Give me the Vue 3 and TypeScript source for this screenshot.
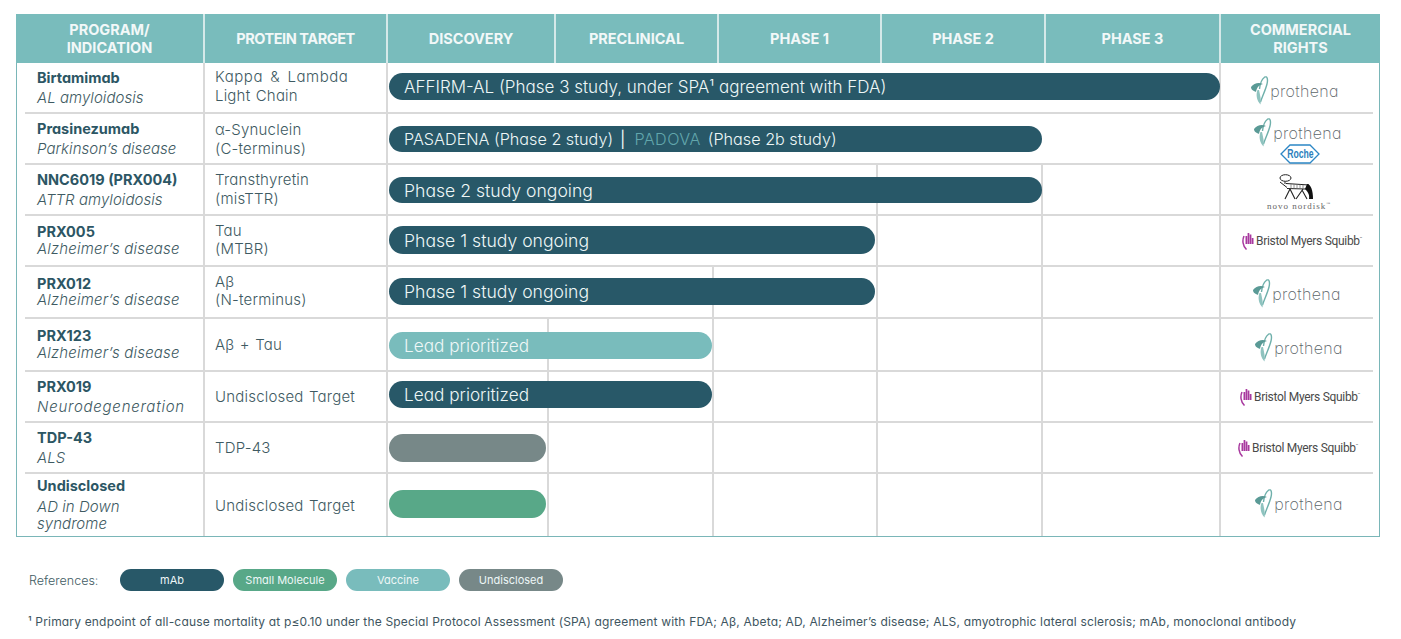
<script setup lang="ts">
type Logo = 'prothena' | 'roche' | 'novo' | 'bms'
interface Seg { t: string; kind?: 'accent' | 'pipe' }
interface Row {
  name: string
  subs: string[]
  target: string[]
  tPad: number
  tight?: boolean
  wide?: boolean
  h: number
  lines: number[]
  bar: { span: number; end: number; top: number; h: number; fs: number; tone: string; segs: Seg[] }
  logo: Logo
  dx: number
  dy: number
}
const heads = [
  ['PROGRAM/', 'INDICATION'], ['PROTEIN TARGET'], ['DISCOVERY'], ['PRECLINICAL'],
  ['PHASE 1'], ['PHASE 2'], ['PHASE 3'], ['COMMERCIAL', 'RIGHTS'],
]
const phases = [0, 1, 2, 3, 4]
const rows: Row[] = [
  { name: 'Birtamimab', subs: ['AL amyloidosis'], target: ['Kappa & Lambda', 'Light Chain'], tPad: 3, h: 51, lines: [], logo: 'prothena', dx: -2, dy: 3,
    bar: { span: 5, end: 1, top: 10, h: 27, fs: 17, tone: 'dark', segs: [{ t: 'AFFIRM-AL (Phase 3 study, under SPA¹ agreement with FDA)' }] } },
  { name: 'Prasinezumab', subs: ['Parkinson’s disease'], target: ['α-Synuclein', '(C-terminus)'], tPad: 0, h: 51, lines: [4], logo: 'roche', dx: 1, dy: 2,
    bar: { span: 4, end: 1, top: 12, h: 26, fs: 16.2, tone: 'dark', segs: [{ t: 'PASADENA (Phase 2 study)' }, { t: '|', kind: 'pipe' }, { t: 'PADOVA', kind: 'accent' }, { t: '(Phase 2b study)' }] } },
  { name: 'NNC6019 (PRX004)', subs: ['ATTR amyloidosis'], target: ['Transthyretin', '(misTTR)'], tPad: 2, h: 51, lines: [2, 3, 4], logo: 'novo', dx: 2, dy: 2,
    bar: { span: 4, end: 1, top: 12, h: 26, fs: 17.6, tone: 'dark', segs: [{ t: 'Phase 2 study ongoing' }] } },
  { name: 'PRX005', subs: ['Alzheimer’s disease'], target: ['Tau', '(MTBR)'], tPad: 2, tight: true, h: 51, lines: [2, 3, 4], logo: 'bms', dx: 5, dy: 0,
    bar: { span: 3, end: 3, top: 10, h: 28, fs: 17.6, tone: 'dark', segs: [{ t: 'Phase 1 study ongoing' }] } },
  { name: 'PRX012', subs: ['Alzheimer’s disease'], target: ['Aβ', '(N-terminus)'], tPad: 3, tight: true, h: 52, lines: [1, 2, 3, 4], logo: 'prothena', dx: 0, dy: 1,
    bar: { span: 3, end: 3, top: 11, h: 27, fs: 17.6, tone: 'dark', segs: [{ t: 'Phase 1 study ongoing' }] } },
  { name: 'PRX123', subs: ['Alzheimer’s disease'], target: ['Aβ + Tau'], tPad: 0, tight: true, h: 53, lines: [0, 1, 2, 3, 4], logo: 'prothena', dx: 2, dy: 3,
    bar: { span: 2, end: 2, top: 13, h: 27, fs: 17.2, tone: 'teal', segs: [{ t: 'Lead prioritized' }] } },
  { name: 'PRX019', subs: ['Neurodegeneration'], target: ['Undisclosed Target'], tPad: 0, wide: true, h: 51, lines: [0, 1, 2, 3, 4], logo: 'bms', dx: 3, dy: 0,
    bar: { span: 2, end: 2, top: 9, h: 27, fs: 17.2, tone: 'dark', segs: [{ t: 'Lead prioritized' }] } },
  { name: 'TDP-43', subs: ['ALS'], target: ['TDP-43'], tPad: 0, h: 51, lines: [0, 1, 2, 3, 4], logo: 'bms', dx: 1, dy: 0,
    bar: { span: 1, end: 3, top: 11, h: 28, fs: 17, tone: 'grey', segs: [] } },
  { name: 'Undisclosed', subs: ['AD in Down', 'syndrome'], target: ['Undisclosed Target'], tPad: 0, h: 62, lines: [0, 1, 2, 3, 4], logo: 'prothena', dx: 2, dy: -2,
    bar: { span: 1, end: 3, top: 16, h: 28, fs: 17, tone: 'green', segs: [] } },
]
const legend = [
  { t: 'mAb', tone: 'dark' }, { t: 'Small Molecule', tone: 'green' },
  { t: 'Vaccine', tone: 'teal' }, { t: 'Undisclosed', tone: 'grey' },
]
</script>

<template>
  <div class="page">
    <section class="table">
      <header class="head">
        <div v-for="(h, i) in heads" :key="i" class="hcell">
          <span v-for="l in h" :key="l">{{ l }}</span>
        </div>
      </header>
      <div class="body">
        <div v-for="r in rows" :key="r.name" class="row" :style="{ height: r.h + 'px' }">
          <div class="cell prog" :class="{ tight: r.tight, wide: r.wide, multi: r.subs.length > 1 }">
            <strong>{{ r.name }}</strong>
            <em v-for="s in r.subs" :key="s">{{ s }}</em>
          </div>
          <div class="cell target" :class="{ tight: r.tight }" :style="{ paddingBottom: r.tPad + 'px' }">
            <span v-for="t in r.target" :key="t" :class="{ spaced: t.includes('&') }">{{ t }}</span>
          </div>
          <div
            v-for="p in phases"
            :key="p"
            class="phase"
            :class="{ line: r.lines.includes(p) || p === 4 }"
            :style="{ gridColumn: p + 3 }"
          ></div>
          <div
            class="bar"
            :class="r.bar.tone"
            :style="{
              gridColumn: '3 / span ' + r.bar.span,
              marginTop: r.bar.top + 'px',
              marginRight: r.bar.end + 'px',
              height: r.bar.h + 'px',
              fontSize: r.bar.fs + 'px',
            }"
          >
            <span v-for="s in r.bar.segs" :key="s.t" :class="s.kind">{{ s.t }}</span>
          </div>
          <div class="logo" :style="{ transform: 'translate(' + r.dx + 'px,' + r.dy + 'px)' }">
            <div v-if="r.logo === 'prothena' || r.logo === 'roche'" class="prothena">
              <svg width="18" height="29" viewBox="0 0 18 29" aria-hidden="true">
                <path d="M8.500 13C9 8 11 3 13.500 1.200C16.500 -.5 17 4 16 8C14.500 14 11.500 20 9.500 26" fill="none" stroke="#6fb0ab" stroke-width="1.400" />
                <path d="M6.500 14C4.500 19 6 25 9.500 28.500C10.500 24 9 19 8 14Z" fill="#8fc3bf" />
                <path d="M0 11C3 7 8 6 12 8C8 9 6 11 5 16C3 15 0 14 0 11Z" fill="#5a9a96" />
              </svg>
              <span>prothena</span>
            </div>
            <div v-if="r.logo === 'roche'" class="roche">
              <svg width="40" height="20" viewBox="0 0 40 20" aria-hidden="true">
                <polygon points="1,10 10,1 30,1 39,10 30,19 10,19" fill="#fff" stroke="#2b86c5" stroke-width="1.300" />
              </svg>
              <span>Roche</span>
            </div>
            <div v-if="r.logo === 'novo'" class="novo">
              <svg width="36" height="27" viewBox="0 0 36 27" aria-hidden="true">
                <ellipse cx="7.500" cy="5" rx="5.500" ry="3.300" fill="none" stroke="#222" stroke-width="1" />
                <path d="M7 8.500L7 11M2 9L9 14.500M8 10.500L31 12M9 15.500L28 16" fill="none" stroke="#222" stroke-width="1" />
                <path d="M13 11v4.500M16 11v4.500M19 11.500v4M22 11.500v4M25 12v4" stroke="#777" stroke-width=".8" />
                <path d="M29 11C33 11 35 18 35 26L31 26C32 21 29 18 27 16Z" fill="#111" />
                <path d="M12 16L7 26M12 16L17 26M25 16L18 26M24 17L29 26" fill="none" stroke="#222" stroke-width="1.100" />
              </svg>
              <span>novo nordisk<sup>™</sup></span>
            </div>
            <div v-if="r.logo === 'bms'" class="bms">
              <svg width="12" height="18" viewBox="0 0 12 18" aria-hidden="true">
                <path d="M2 4C.2 8 .5 14 4.500 17.500" fill="none" stroke="#a8399f" stroke-width="1.500" />
                <path d="M3.500 4h1.700v8H3.500zM5.600 1h1.700v11H5.600zM7.700 2.500h1.700v9.500H7.700zM9.800 6h1.700v6H9.800z" fill="#a8399f" />
              </svg>
              <span>Bristol Myers Squibb<sup>™</sup></span>
            </div>
          </div>
        </div>
      </div>
    </section>

    <div class="legend">
      <span class="ref">References:</span>
      <span v-for="l in legend" :key="l.t" class="pill" :class="l.tone">{{ l.t }}</span>
    </div>

    <p class="note">¹ Primary endpoint of all-cause mortality at p≤0.10 under the Special Protocol Assessment (SPA) agreement with FDA; Aβ, Abeta; AD, Alzheimer’s disease; ALS, amyotrophic lateral sclerosis; mAb, monoclonal antibody</p>
  </div>
</template>

<style>
html, body { margin: 0; background: #fff; overflow: hidden; }
</style>

<style scoped>
.page {
  width: 1401px;
  height: 639px;
  box-sizing: border-box;
  padding: 14px 0 0 16px;
  font-family: Inter, "Liberation Sans", sans-serif;
  font-feature-settings: "cv11" 1;
  color: #3e5a62;
}
.table { width: 1364px; }
.head {
  display: grid;
  grid-template-columns: 189px 183px 168px 163px 163px 164px 175px 159px;
  height: 49px;
  background: #79bcbc;
}
.hcell {
  display: flex;
  flex-direction: column;
  align-items: center;
  justify-content: center;
  border-right: 2px solid #d5e9e9;
  color: #f2f8f8;
  font-size: 14.500px;
  font-weight: 700;
  line-height: 17.500px;
}
.hcell:nth-child(2) { letter-spacing: -.45px; }
.hcell:last-child { border-right: 0; }
.body {
  box-sizing: border-box;
  border: 1px solid #7ab6b8;
  border-top: 0;
  padding: 0 6px 0 8px;
  height: 474px;
}
.row {
  display: grid;
  grid-template-columns: 180px 183px 161px 165px 164px 165px 178px 152px;
  grid-template-rows: 1fr;
  box-sizing: border-box;
  border-bottom: 2px solid #d9d9d9;
}
.row:last-child { border-bottom: 0; }
.cell {
  grid-row: 1;
  display: flex;
  flex-direction: column;
  justify-content: center;
  border-right: 2px solid #d9d9d9;
  font-size: 15px;
}
.prog { grid-column: 1; padding-left: 12px; line-height: 20px; }
.prog.tight { line-height: 16.500px; }
.prog strong { color: #2c5664; font-weight: 700; font-size: 14.500px; }
.prog em { font-style: italic; font-weight: 300; color: #3e5a62; letter-spacing: .05px; }
.prog.wide em { letter-spacing: .75px; }
.prog.tight em { letter-spacing: .2px; }
.prog.multi em { line-height: 17px; margin-top: 1.500px; }
.prog.multi em + em { margin-top: 0; margin-bottom: 2.500px; }
.target { grid-column: 2; padding-left: 10px; line-height: 19px; font-weight: 300; letter-spacing: .2px; word-spacing: 1px; }
.target.tight { line-height: 17.500px; }
.spaced { letter-spacing: .55px; word-spacing: 2.500px; }
.phase { grid-row: 1; }
.phase.line { border-right: 2px solid #d9d9d9; }
.bar {
  grid-row: 1;
  z-index: 1;
  align-self: start;
  margin-left: 1px;
  padding-left: 15px;
  display: flex;
  align-items: center;
  border-radius: 14px;
  color: #eef7f7;
  font-weight: 300;
  white-space: pre;
}
.dark { background: #285868; }
.teal { background: #79bcbc; }
.grey { background: #778888; }
.green { background: #58a888; }
.accent { color: #62a6ac; margin-right: 7px; letter-spacing: .4px; }
.pipe { font-weight: 400; margin: 0 9px 0 7px; }
.logo {
  grid-column: 8;
  grid-row: 1;
  z-index: 1;
  display: flex;
  flex-direction: column;
  align-items: center;
  justify-content: center;
}
.prothena { display: flex; align-items: center; gap: 1px; height: 29px; }
.prothena span {
  font-size: 16px;
  font-weight: 200;
  letter-spacing: .35px;
  color: #5c666a;
  margin-top: 1px;
}
.roche {
  display: grid;
  place-items: center;
  width: 40px;
  height: 20px;
  margin: -3px 0 0 4px;
}
.roche svg, .roche span { grid-area: 1 / 1; }
.roche span {
  font-family: "Liberation Sans", sans-serif;
  font-feature-settings: normal;
  font-size: 12px;
  line-height: 14px;
  font-weight: 700;
  color: #2b7fbd;
  transform: scaleX(.72);
  z-index: 1;
}
.novo { display: flex; flex-direction: column; align-items: center; line-height: 8px; }
.novo svg { margin-right: 6px; }
.novo span { font-family: "Liberation Serif", serif; font-feature-settings: normal; font-size: 9px; letter-spacing: 1px; color: #666; }
.novo sup { font-size: 4px; }
.bms { display: flex; align-items: center; gap: 2px; }
.bms span {
  font-family: Roboto, sans-serif;
  font-feature-settings: normal;
  font-size: 12px;
  letter-spacing: -.3px;
  color: #4a4a4a;
}
.bms sup { font-size: 4px; }
.legend {
  display: flex;
  align-items: center;
  height: 22px;
  margin-top: 32px;
  padding-left: 13px;
  gap: 9px;
}
.ref { width: 82px; font-size: 12.500px; font-weight: 300; }
.pill {
  width: 104px;
  height: 22px;
  border-radius: 11px;
  display: flex;
  align-items: center;
  justify-content: center;
  font-size: 11px;
  color: #eef7f7;
}
.note {
  margin: 23px 0 0 12px;
  font-size: 12px;
  line-height: 15px;
  letter-spacing: .17px;
  white-space: nowrap;
  color: #3e5560;
}
</style>
